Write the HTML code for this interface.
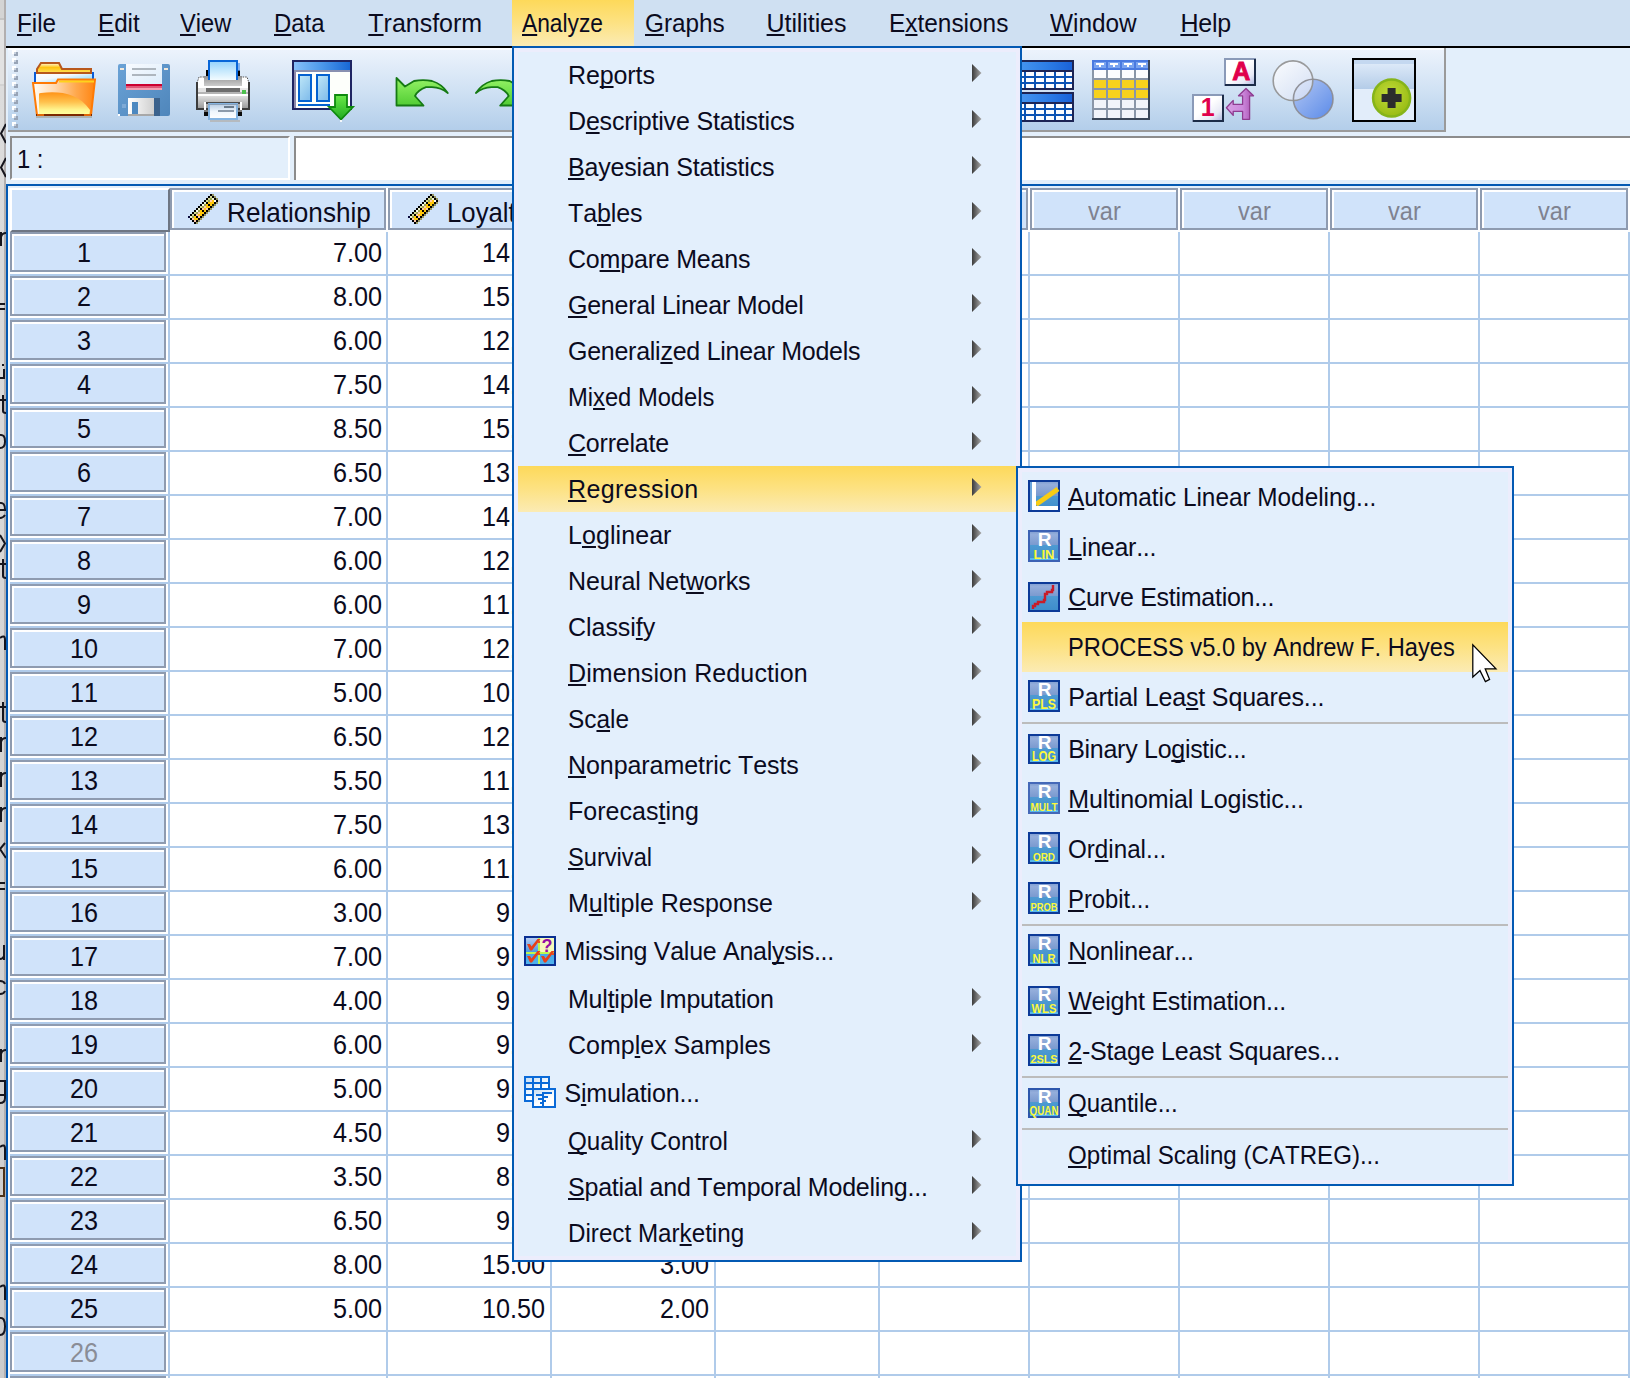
<!DOCTYPE html>
<html lang="en"><head><meta charset="utf-8"><title>IBM SPSS Statistics Data Editor</title>
<style>
html,body{margin:0;padding:0;}
body{width:1630px;height:1378px;overflow:hidden;background:#fff;font-family:"Liberation Sans",sans-serif;}
#root{position:relative;width:1630px;height:1378px;overflow:hidden;background:#fff;}
#root div,#root span.t,#root svg{position:absolute;box-sizing:border-box;}
span.t{white-space:pre;line-height:normal;font-kerning:none;color:#0b0b1e;transform-origin:0 0;}
span.t u{text-decoration:underline;text-decoration-thickness:2px;text-underline-offset:2px;text-decoration-skip-ink:none;}
.rh{background:#d0e3fa;border:2px solid #8e9bb0;box-shadow:inset 2px 2px 0 #fff;}
.ch{background:#d0e3fa;border:2px solid #8e9bb0;box-shadow:inset 2px 2px 0 #fff;}
.hl{background:linear-gradient(#fdd95a,#fde283 50%,#fbebb4);}
.menu{background:#ecedfc;border:2px solid #0359b3;}
.mi{background:#e3effc;}
.sep{background:#bcbcbc;}

</style></head>
<body>
<div id="root">
<div style="left:0px;top:0px;width:6px;height:1378px;background:linear-gradient(#d4d4d4 0,#d4d4d4 18px,#c4c4c4 18px,#c4c4c4 20px,#e2e2e2 20px,#e2e2e2 84px,#d2d2d2 84px,#d2d2d2 86px,#dcdcdc 86px,#d6d6d6 600px,#cccccc 100%);"></div>
<div style="left:4px;top:0px;width:2px;height:1378px;background:#b2afaf;"></div>
<svg style="left:0px;top:0px;" width="6" height="1378" viewBox="0 0 6 1378" ><path d="M6 124 L1 133.5 L6 143 M6 158 L1 167.5 L6 177 M1 232 V246 M1 237 Q2 233 6 233 M0 304 H5 M0 309 H5 M3 364 v2 M0 378 H5 M4 369 V378 M3 395 V411 Q3 413 6 413 M0 400 H6 M0 435 Q5 434 5 441.5 Q5 448 0 448 M0 510.0 H5 Q5 502 0 503 M0 518 Q3 518 5 515 M0 535 L5 543.5 L0 552 M3 559 V576 Q3 578 6 578 M0 564 H6 M0 638 Q5 634 5 640 V650 M3 702 V720 Q3 722 6 722 M0 707 H6 M1 737 V752 M1 742 Q2 738 6 738 M1 772 V787 M1 777 Q2 773 6 773 M1 807 V822 M1 812 Q2 808 6 808 M5 843 L0 849 L6 858 M0 883 H5 M0 889 H5 M4 945 V960 M0 959 Q3 959 4 956 M0 981 Q4 981 5 984 M0 994 Q4 994 5 991 M1 1049 V1062 M1 1054 Q2 1050 6 1050 M0 1081 H5 V1098 Q5 1103 0 1103 M0 1095 H5 M0 1147 Q5 1143 5 1149 V1160 M0 1287 Q5 1283 5 1289 V1300 M0 1318 Q5 1317 5 1326.5 Q5 1335 0 1335" fill="none" stroke="#15151d" stroke-width="2"/><rect x="-1" y="1168" width="5" height="28" fill="none" stroke="#4a3018" stroke-width="2"/></svg>
<div style="left:6px;top:0px;width:1624px;height:46px;background:#cfe0f2;"></div>
<div style="left:6px;top:46px;width:1624px;height:2px;background:#000;"></div>
<div class="hl" style="left:512px;top:0px;width:122px;height:46px;"></div>
<span class="t" style="left:16.50px;top:9.0px;font-size:25px;transform:scaleX(0.9701);"><u>F</u>ile</span>
<span class="t" style="left:98.20px;top:9.0px;font-size:25px;transform:scaleX(0.9675);"><u>E</u>dit</span>
<span class="t" style="left:179.80px;top:9.0px;font-size:25px;transform:scaleX(0.9457);"><u>V</u>iew</span>
<span class="t" style="left:274.00px;top:9.0px;font-size:25px;transform:scaleX(0.9563);"><u>D</u>ata</span>
<span class="t" style="left:368.30px;top:9.0px;font-size:25px;letter-spacing:-0.007px;"><u>T</u>ransform</span>
<span class="t" style="left:522.20px;top:9.0px;font-size:25px;transform:scaleX(0.9109);"><u>A</u>nalyze</span>
<span class="t" style="left:644.90px;top:9.0px;font-size:25px;transform:scaleX(0.9719);"><u>G</u>raphs</span>
<span class="t" style="left:766.60px;top:9.0px;font-size:25px;letter-spacing:-0.095px;"><u>U</u>tilities</span>
<span class="t" style="left:889.10px;top:9.0px;font-size:25px;transform:scaleX(0.9762);">E<u>x</u>tensions</span>
<span class="t" style="left:1050.10px;top:9.0px;font-size:25px;transform:scaleX(0.9744);"><u>W</u>indow</span>
<span class="t" style="left:1180.40px;top:9.0px;font-size:25px;letter-spacing:-0.189px;"><u>H</u>elp</span>
<div style="left:6px;top:48px;width:1624px;height:88px;background:#e3effb;"></div>
<div style="left:8px;top:48px;width:1438px;height:84px;background:linear-gradient(#fbfdff 0,#fbfdff 2px,#ecf3fc 2px,#d1e2f4 50%,#b3ceea 100%);border-right:2px solid #9a9a9a;border-bottom:2px solid #9a9a9a;"></div>
<svg style="left:12px;top:48px;" width="6" height="82" viewBox="0 0 6 82" ><rect x="0" y="2" width="4" height="4" fill="#fff"/><rect x="2" y="4" width="4" height="4" fill="#98a4b6"/><rect x="2" y="4" width="2" height="2" fill="#c8d2e0"/><rect x="0" y="10" width="4" height="4" fill="#fff"/><rect x="2" y="12" width="4" height="4" fill="#98a4b6"/><rect x="2" y="12" width="2" height="2" fill="#c8d2e0"/><rect x="0" y="18" width="4" height="4" fill="#fff"/><rect x="2" y="20" width="4" height="4" fill="#98a4b6"/><rect x="2" y="20" width="2" height="2" fill="#c8d2e0"/><rect x="0" y="26" width="4" height="4" fill="#fff"/><rect x="2" y="28" width="4" height="4" fill="#98a4b6"/><rect x="2" y="28" width="2" height="2" fill="#c8d2e0"/><rect x="0" y="34" width="4" height="4" fill="#fff"/><rect x="2" y="36" width="4" height="4" fill="#98a4b6"/><rect x="2" y="36" width="2" height="2" fill="#c8d2e0"/><rect x="0" y="42" width="4" height="4" fill="#fff"/><rect x="2" y="44" width="4" height="4" fill="#98a4b6"/><rect x="2" y="44" width="2" height="2" fill="#c8d2e0"/><rect x="0" y="50" width="4" height="4" fill="#fff"/><rect x="2" y="52" width="4" height="4" fill="#98a4b6"/><rect x="2" y="52" width="2" height="2" fill="#c8d2e0"/><rect x="0" y="58" width="4" height="4" fill="#fff"/><rect x="2" y="60" width="4" height="4" fill="#98a4b6"/><rect x="2" y="60" width="2" height="2" fill="#c8d2e0"/><rect x="0" y="66" width="4" height="4" fill="#fff"/><rect x="2" y="68" width="4" height="4" fill="#98a4b6"/><rect x="2" y="68" width="2" height="2" fill="#c8d2e0"/><rect x="0" y="74" width="4" height="4" fill="#fff"/><rect x="2" y="76" width="4" height="4" fill="#98a4b6"/><rect x="2" y="76" width="2" height="2" fill="#c8d2e0"/><rect x="0" y="82" width="4" height="4" fill="#fff"/><rect x="2" y="84" width="4" height="4" fill="#98a4b6"/><rect x="2" y="84" width="2" height="2" fill="#c8d2e0"/></svg>
<svg style="left:30px;top:60px;" width="68" height="60" viewBox="0 0 68 60" >
<defs>
<linearGradient id="fo1" x1="0" y1="0" x2="1" y2="0"><stop offset="0" stop-color="#fffdf6"/><stop offset="0.35" stop-color="#ffd9b0"/><stop offset="0.7" stop-color="#ffa84c"/><stop offset="1" stop-color="#ff8412"/></linearGradient>
<linearGradient id="fo2" x1="0" y1="0" x2="0" y2="1"><stop offset="0" stop-color="#ff9418"/><stop offset="0.45" stop-color="#ffc24e"/><stop offset="0.8" stop-color="#fff48e"/><stop offset="1" stop-color="#ffff9e"/></linearGradient>
<linearGradient id="fo3" x1="0" y1="0" x2="0" y2="1"><stop offset="0" stop-color="#fffbe0"/><stop offset="0.45" stop-color="#ffc412"/><stop offset="1" stop-color="#ffe25a"/></linearGradient>
<linearGradient id="fo4" x1="0" y1="0" x2="1" y2="1"><stop offset="0" stop-color="#fff"/><stop offset="0.4" stop-color="#f4f8fc"/><stop offset="0.7" stop-color="#aee4fc"/><stop offset="1" stop-color="#b8e6fa"/></linearGradient>
</defs>
<path d="M7 13 V9 L11 3 H29 L32 9 H61 V13 Z" fill="url(#fo3)" stroke="#b8581c" stroke-width="2" stroke-linejoin="miter"/>
<rect x="5" y="13" width="58" height="10" fill="url(#fo4)"/>
<rect x="4" y="12" width="2" height="11" fill="#0a5cd8"/><rect x="62" y="12" width="2" height="9" fill="#0a5cd8"/>
<rect x="6" y="12" width="56" height="2" fill="#b8581c"/>
<path d="M3 23 H26 L28 19.5 H65 L61 55 H7 Z" fill="url(#fo1)" stroke="#ff7a04" stroke-width="2" stroke-linejoin="miter"/>
<rect x="29" y="20.5" width="35" height="2" fill="#ffd21c"/>
<path d="M9 34 Q9 33 11 33 C30 31 48 33 60 50 L59.5 54 H9 Z" fill="url(#fo2)"/>
<path d="M6 55 H62" stroke="#7c2a00" stroke-width="2"/>
<path d="M7 55 H14 M54 55 H61" stroke="#e06808" stroke-width="2"/>
<path d="M6 57 H62" stroke="#a8a8a0" stroke-width="2" opacity="0.75"/>
</svg>
<svg style="left:118px;top:64px;" width="52" height="52" viewBox="0 0 52 52" >
<defs>
<linearGradient id="fl1" x1="0" y1="0" x2="1" y2="1"><stop offset="0" stop-color="#6aa2d6"/><stop offset="1" stop-color="#4f86bb"/></linearGradient>
<linearGradient id="fl2" x1="0" y1="0" x2="1" y2="1"><stop offset="0" stop-color="#f8fbff"/><stop offset="1" stop-color="#dcecfa"/></linearGradient>
<linearGradient id="fl3" x1="0" y1="0" x2="1" y2="0"><stop offset="0" stop-color="#fff"/><stop offset="1" stop-color="#cfcfcf"/></linearGradient>
</defs>
<rect x="0" y="0" width="52" height="52" rx="2" fill="url(#fl1)"/>
<rect x="8" y="0" width="36" height="20" fill="url(#fl2)"/>
<rect x="14" y="4" width="24" height="2" fill="#aeb6be"/>
<rect x="14" y="10" width="24" height="2" fill="#aeb6be"/>
<rect x="8" y="20" width="36" height="2" fill="#cc0030"/><rect x="8" y="22" width="36" height="2" fill="#e05878"/>
<rect x="8" y="24" width="36" height="2" fill="#f4a0b2"/>
<rect x="2" y="4" width="4" height="2" fill="#f2e8da"/>
<rect x="46" y="4" width="4" height="2" fill="#f2e8da"/>
<rect x="10" y="34" width="26" height="16" fill="url(#fl3)"/>
<rect x="14" y="38" width="6" height="12" fill="#4c88c0"/>
<rect x="36" y="34" width="6" height="18" fill="#3b628c"/>
<rect x="10" y="50" width="26" height="2" fill="#a8a8a8"/>
<rect x="4" y="40" width="4" height="4" fill="#7eaad6"/>
<rect x="0" y="50" width="2" height="2" fill="#fff"/>
</svg>
<svg style="left:194px;top:58px;" width="58" height="66" viewBox="0 0 58 66" >
<defs>
<linearGradient id="pr1" x1="0" y1="0" x2="0" y2="1"><stop offset="0" stop-color="#94d2fc"/><stop offset="0.5" stop-color="#c4e8fd"/><stop offset="1" stop-color="#f2fbff"/></linearGradient>
<linearGradient id="pr2" x1="0" y1="0" x2="0" y2="1"><stop offset="0" stop-color="#8c8c8c"/><stop offset="0.35" stop-color="#a8a8a8"/><stop offset="1" stop-color="#cccccc"/></linearGradient>
<linearGradient id="pr3" x1="0" y1="0" x2="0" y2="1"><stop offset="0" stop-color="#dedede"/><stop offset="1" stop-color="#9c9c9c"/></linearGradient>
<linearGradient id="pr4" x1="0" y1="0" x2="0" y2="1"><stop offset="0" stop-color="#b8cce2"/><stop offset="0.5" stop-color="#eef5fc"/><stop offset="1" stop-color="#fff"/></linearGradient>
</defs>
<rect x="12" y="12" width="2" height="6" fill="#000"/><rect x="44" y="12" width="2" height="6" fill="#000"/>
<path d="M5 19 L3 25 H55 L53 19 Z" fill="#fff" stroke="#555" stroke-width="1" stroke-dasharray="1.5 1"/>
<rect x="10" y="18" width="38" height="10" fill="url(#pr2)"/>
<rect x="3" y="25" width="52" height="26" fill="#fff" stroke="#3c3c3c" stroke-width="2"/>
<rect x="4" y="24" width="6" height="4" fill="#fff"/><rect x="48" y="24" width="6" height="4" fill="#fff"/><rect x="10" y="18" width="38" height="10" fill="url(#pr2)"/>
<rect x="4" y="28" width="50" height="2" fill="#fff"/>
<rect x="4" y="30" width="8" height="4" fill="#e2e2e2"/><rect x="12" y="30" width="34" height="4" fill="#6c6c6c"/><rect x="46" y="30" width="8" height="4" fill="#e8e8e8"/>
<rect x="4" y="34" width="50" height="2" fill="#b4b4b4"/>
<rect x="4" y="36" width="50" height="2" fill="#fff"/>
<rect x="4" y="38" width="50" height="12" fill="url(#pr3)"/>
<rect x="48" y="32" width="4" height="4" fill="#4cc04c"/>
<rect x="15" y="3" width="28" height="19" fill="url(#pr1)"/>
<path d="M15 22 V3 H43 V22" fill="none" stroke="#0866d8" stroke-width="2"/>
<rect x="44" y="5" width="2" height="8" fill="#5a9ae8" opacity="0.7"/>
<rect x="10" y="44" width="2" height="8" fill="#fff"/><rect x="46" y="44" width="2" height="8" fill="#fff"/>
<rect x="12" y="44" width="34" height="2" fill="#4a4a4a"/>
<rect x="10" y="52" width="4" height="2" fill="#777"/><rect x="44" y="52" width="4" height="2" fill="#777"/>
<rect x="10" y="54" width="4" height="4" fill="#0a0a0a"/><rect x="44" y="54" width="4" height="4" fill="#0a0a0a"/>
<rect x="15" y="46" width="28" height="15" fill="url(#pr4)" stroke="#84b4e2" stroke-width="2"/>
<rect x="14" y="46" width="30" height="1" fill="#8aa0b8"/>
<rect x="30" y="48" width="10" height="2" fill="#6a7a8a"/>
<rect x="24" y="52" width="16" height="2" fill="#8c9aaa"/>
<rect x="16" y="62" width="30" height="2" fill="#b4b4b4" opacity="0.8"/>
</svg>
<svg style="left:292px;top:60px;" width="64" height="64" viewBox="0 0 64 64" >
<defs>
<linearGradient id="rc1" x1="0" y1="0" x2="1" y2="0"><stop offset="0" stop-color="#86c0fa"/><stop offset="0.5" stop-color="#4c98ea"/><stop offset="1" stop-color="#1868d6"/></linearGradient>
<linearGradient id="rc2" x1="0" y1="0" x2="0.6" y2="1"><stop offset="0" stop-color="#c0e8f8"/><stop offset="1" stop-color="#86c0ec"/></linearGradient>
<linearGradient id="rc3" x1="0" y1="0" x2="0" y2="1"><stop offset="0" stop-color="#6ae848"/><stop offset="0.5" stop-color="#44cc34"/><stop offset="1" stop-color="#22a822"/></linearGradient>
</defs>
<rect x="1" y="1" width="58" height="48" fill="#fdfffb" stroke="#1e2462" stroke-width="2"/>
<rect x="2" y="2" width="56" height="8" fill="url(#rc1)"/>
<rect x="2" y="10" width="56" height="2" fill="#8890b0"/>
<rect x="2" y="12" width="2" height="36" fill="#8c88ac"/>
<rect x="7" y="15" width="12" height="26" fill="url(#rc2)" stroke="#0462d0" stroke-width="2"/>
<rect x="25" y="15" width="12" height="26" fill="url(#rc2)" stroke="#0462d0" stroke-width="2"/>
<rect x="6" y="44" width="32" height="2" fill="#0462d0"/>
<path d="M43 35 H55 V47 H61 L49 59.5 L37 47 H43 Z" fill="url(#rc3)" stroke="#0e8a0e" stroke-width="1.8" stroke-linejoin="miter"/>
<rect x="48" y="60" width="2" height="2" fill="#f4f8fb"/>
</svg>
<svg style="left:394px;top:76px;" width="58" height="34" viewBox="0 0 58 34" >
<defs><linearGradient id="un1" x1="0" y1="0" x2="0" y2="1"><stop offset="0" stop-color="#96f266"/><stop offset="0.5" stop-color="#72e04c"/><stop offset="1" stop-color="#52cc34"/></linearGradient></defs>
<path d="M2.5 2 L11 10.5 L20 5 Q29 3.3 38 5 Q48 8 53.8 17 Q47 11.6 38 11.2 L32 11.2 Q24 14 21 20 L29.5 29.5 H2.5 Z" fill="url(#un1)" stroke="#167a14" stroke-width="1.8" stroke-linejoin="round"/>
</svg>
<svg style="left:474px;top:76px;" width="58" height="34" viewBox="0 0 58 34" >
<g transform="translate(55.7 0) scale(-1 1)"><path d="M2.5 2 L11 10.5 L20 5 Q29 3.3 38 5 Q48 8 53.8 17 Q47 11.6 38 11.2 L32 11.2 Q24 14 21 20 L29.5 29.5 H2.5 Z" fill="url(#un1)" stroke="#167a14" stroke-width="1.8" stroke-linejoin="round"/></g>
</svg>
<svg style="left:1010px;top:60px;" width="64" height="62" viewBox="0 0 64 62" ><defs><linearGradient id="sp1" x1="0" y1="0" x2="1" y2="0"><stop offset="0" stop-color="#4c9cf2"/><stop offset="0.6" stop-color="#2c7ce6"/><stop offset="1" stop-color="#1a62d8"/></linearGradient></defs><rect x="0" y="0" width="64" height="30" fill="#1c2454"/><rect x="2" y="2" width="60" height="8" fill="url(#sp1)"/><rect x="2" y="12" width="60" height="16" fill="#0a52b4"/><rect x="-4" y="12" width="8" height="4" fill="#fafcff"/><rect x="6" y="12" width="8" height="4" fill="#fafcff"/><rect x="16" y="12" width="8" height="4" fill="#fafcff"/><rect x="26" y="12" width="8" height="4" fill="#fafcff"/><rect x="36" y="12" width="8" height="4" fill="#fafcff"/><rect x="46" y="12" width="8" height="4" fill="#fafcff"/><rect x="56" y="12" width="6" height="4" fill="#fafcff"/><rect x="-4" y="18" width="8" height="4" fill="#fafcff"/><rect x="6" y="18" width="8" height="4" fill="#fafcff"/><rect x="16" y="18" width="8" height="4" fill="#fafcff"/><rect x="26" y="18" width="8" height="4" fill="#fafcff"/><rect x="36" y="18" width="8" height="4" fill="#fafcff"/><rect x="46" y="18" width="8" height="4" fill="#fafcff"/><rect x="56" y="18" width="6" height="4" fill="#fafcff"/><rect x="-4" y="24" width="8" height="4" fill="#fafcff"/><rect x="6" y="24" width="8" height="4" fill="#fafcff"/><rect x="16" y="24" width="8" height="4" fill="#fafcff"/><rect x="26" y="24" width="8" height="4" fill="#fafcff"/><rect x="36" y="24" width="8" height="4" fill="#fafcff"/><rect x="46" y="24" width="8" height="4" fill="#fafcff"/><rect x="56" y="24" width="6" height="4" fill="#fafcff"/><rect x="0" y="32" width="64" height="30" fill="#1c2454"/><rect x="2" y="34" width="60" height="8" fill="url(#sp1)"/><rect x="2" y="44" width="60" height="16" fill="#0a52b4"/><rect x="-4" y="44" width="8" height="4" fill="#fafcff"/><rect x="6" y="44" width="8" height="4" fill="#fafcff"/><rect x="16" y="44" width="8" height="4" fill="#fafcff"/><rect x="26" y="44" width="8" height="4" fill="#fafcff"/><rect x="36" y="44" width="8" height="4" fill="#fafcff"/><rect x="46" y="44" width="8" height="4" fill="#fafcff"/><rect x="56" y="44" width="6" height="4" fill="#fafcff"/><rect x="-4" y="50" width="8" height="4" fill="#fafcff"/><rect x="6" y="50" width="8" height="4" fill="#fafcff"/><rect x="16" y="50" width="8" height="4" fill="#fafcff"/><rect x="26" y="50" width="8" height="4" fill="#fafcff"/><rect x="36" y="50" width="8" height="4" fill="#fafcff"/><rect x="46" y="50" width="8" height="4" fill="#fafcff"/><rect x="56" y="50" width="6" height="4" fill="#fafcff"/><rect x="-4" y="56" width="8" height="4" fill="#fafcff"/><rect x="6" y="56" width="8" height="4" fill="#fafcff"/><rect x="16" y="56" width="8" height="4" fill="#fafcff"/><rect x="26" y="56" width="8" height="4" fill="#fafcff"/><rect x="36" y="56" width="8" height="4" fill="#fafcff"/><rect x="46" y="56" width="8" height="4" fill="#fafcff"/><rect x="56" y="56" width="6" height="4" fill="#fafcff"/></svg>
<svg style="left:1092px;top:60px;" width="58" height="60" viewBox="0 0 58 60" ><rect x="0" y="0" width="58" height="60" fill="#8a96a8"/><rect x="0" y="0" width="58" height="10" fill="#4a7ae0"/><rect x="0" y="58" width="58" height="2" fill="#3a4658"/><rect x="56" y="0" width="2" height="60" fill="#3a4658"/><rect x="2" y="2" width="12" height="6" fill="#7aa4f0"/><path d="M4 3 h8 v2 h-3 v2 h-2 v-2 h-3 z" fill="#fff"/><rect x="2" y="10" width="12" height="8" fill="#fcfcfe"/><rect x="2" y="20" width="12" height="8" fill="#f8d21c"/><rect x="2" y="30" width="12" height="8" fill="#f8d21c"/><rect x="2" y="40" width="12" height="8" fill="#f2f4fa"/><rect x="2" y="50" width="12" height="8" fill="#f2f4fa"/><rect x="16" y="2" width="12" height="6" fill="#7aa4f0"/><path d="M18 3 h8 v2 h-3 v2 h-2 v-2 h-3 z" fill="#fff"/><rect x="16" y="10" width="12" height="8" fill="#fcfcfe"/><rect x="16" y="20" width="12" height="8" fill="#f8d21c"/><rect x="16" y="30" width="12" height="8" fill="#f8d21c"/><rect x="16" y="40" width="12" height="8" fill="#f2f4fa"/><rect x="16" y="50" width="12" height="8" fill="#f2f4fa"/><rect x="30" y="2" width="12" height="6" fill="#7aa4f0"/><path d="M32 3 h8 v2 h-3 v2 h-2 v-2 h-3 z" fill="#fff"/><rect x="30" y="10" width="12" height="8" fill="#fcfcfe"/><rect x="30" y="20" width="12" height="8" fill="#f8d21c"/><rect x="30" y="30" width="12" height="8" fill="#f8d21c"/><rect x="30" y="40" width="12" height="8" fill="#f2f4fa"/><rect x="30" y="50" width="12" height="8" fill="#f2f4fa"/><rect x="44" y="2" width="12" height="6" fill="#7aa4f0"/><path d="M46 3 h8 v2 h-3 v2 h-2 v-2 h-3 z" fill="#fff"/><rect x="44" y="10" width="12" height="8" fill="#fcfcfe"/><rect x="44" y="20" width="12" height="8" fill="#f8d21c"/><rect x="44" y="30" width="12" height="8" fill="#f8d21c"/><rect x="44" y="40" width="12" height="8" fill="#f2f4fa"/><rect x="44" y="50" width="12" height="8" fill="#f2f4fa"/></svg>
<svg style="left:1190px;top:56px;" width="70" height="70" viewBox="0 0 70 70" >
<defs><linearGradient id="lb1" x1="0" y1="0" x2="1" y2="1"><stop offset="0" stop-color="#fff"/><stop offset="0.45" stop-color="#fff"/><stop offset="0.75" stop-color="#e8eaf6"/><stop offset="1" stop-color="#a8b4de"/></linearGradient>
<linearGradient id="lb2" x1="0" y1="0" x2="1" y2="0"><stop offset="0" stop-color="#d8a0e4"/><stop offset="0.6" stop-color="#cc88dc"/><stop offset="1" stop-color="#a850b0"/></linearGradient></defs>
<rect x="35" y="3" width="30" height="26" fill="url(#lb1)"/>
<path d="M35 30 V3 H66" fill="none" stroke="#8a9ab8" stroke-width="2"/>
<path d="M35 29 H65 V3" fill="none" stroke="#1c2c48" stroke-width="2"/>
<text x="51.2" y="24" font-family="Liberation Sans, sans-serif" font-weight="bold" font-size="25" fill="#e0004c" stroke="#e0004c" stroke-width="0.9" text-anchor="middle">A</text>
<rect x="3" y="39" width="30" height="26" fill="url(#lb1)"/>
<path d="M3 66 V39 H34" fill="none" stroke="#8a9ab8" stroke-width="2"/>
<path d="M3 65 H33 V39" fill="none" stroke="#1c2c48" stroke-width="2"/>
<text x="17.8" y="60" font-family="Liberation Sans, sans-serif" font-weight="bold" font-size="25" fill="#e0004c" text-anchor="middle">1</text>
<path d="M56 32.5 L63.5 39.8 H59.6 V63.3 H52.6 V55.3 H43.2 V59.4 L36.4 51.8 L43.2 44.4 V48.4 H52.6 V39.8 H48.5 Z" fill="url(#lb2)" stroke="#8e3c90" stroke-width="1.3" stroke-linejoin="round"/>
</svg>
<svg style="left:1270px;top:58px;" width="66" height="64" viewBox="0 0 66 64" >
<defs><linearGradient id="ci1" x1="0" y1="0" x2="1" y2="1"><stop offset="0" stop-color="#fff"/><stop offset="1" stop-color="#d4def4"/></linearGradient>
<linearGradient id="ci2" x1="0" y1="0" x2="1" y2="1"><stop offset="0" stop-color="#b4c8f4"/><stop offset="1" stop-color="#5a8ae8"/></linearGradient></defs>
<circle cx="43.2" cy="41" r="19.8" fill="url(#ci2)"/>
<circle cx="23" cy="22.7" r="19.8" fill="url(#ci1)" fill-opacity="0.82"/>
<circle cx="43.2" cy="41" r="19.8" fill="none" stroke="#8a8a90" stroke-width="1.6" opacity="0.9"/>
<circle cx="23" cy="22.7" r="19.8" fill="none" stroke="#909090" stroke-width="1.6" opacity="0.9"/>
</svg>
<svg style="left:1352px;top:58px;" width="64" height="64" viewBox="0 0 64 64" >
<defs><linearGradient id="pb1" x1="0" y1="0" x2="0" y2="1"><stop offset="0" stop-color="#dce9f8"/><stop offset="1" stop-color="#b4cce8"/></linearGradient>
<radialGradient id="pb2" cx="0.45" cy="0.4" r="0.6"><stop offset="0" stop-color="#c4dc3a"/><stop offset="1" stop-color="#98bc14"/></radialGradient></defs>
<rect x="1" y="1" width="62" height="62" fill="#e2edfa" stroke="#000" stroke-width="2"/>
<rect x="2" y="2" width="60" height="4" fill="#c4d8f0"/>
<rect x="2" y="6" width="60" height="25" fill="url(#pb1)"/>
<circle cx="39.6" cy="40" r="18.5" fill="url(#pb2)" stroke="#86b41a" stroke-width="2.5"/>
<path d="M35.6 30 h8 v6 h6 v8 h-6 v6 h-8 v-6 h-6 v-8 h6 z" fill="#2c2c2c"/>
</svg>
<div style="left:6px;top:136px;width:1624px;height:48px;background:#e3effb;"></div>
<div style="left:10px;top:136px;width:280px;height:44px;background:#e3effb;border-top:2px solid #8c8c8c;border-left:2px solid #8c8c8c;border-right:2px solid #fff;border-bottom:2px solid #fff;"></div>
<div style="left:294px;top:136px;width:1336px;height:44px;background:#fff;border-top:2px solid #8c8c8c;border-left:2px solid #8c8c8c;"></div>
<span class="t" style="left:16.69px;top:145.0px;font-size:25px;transform:scaleX(0.9531);">1 :</span>
<div style="left:6px;top:184px;width:1624px;height:2px;background:#0359b3;"></div>
<div style="left:6px;top:186px;width:2px;height:1192px;background:#0359b3;"></div>
<div style="left:8px;top:186px;width:1622px;height:2px;background:#e3effb;"></div>
<div style="left:8px;top:188px;width:2px;height:1190px;background:#f4faff;"></div>
<div style="left:10px;top:188px;width:158px;height:1190px;background:#fff;"></div>
<div style="left:168px;top:232px;width:2px;height:1146px;background:#b0cbea;"></div>
<div style="left:386px;top:232px;width:2px;height:1146px;background:#b0cbea;"></div>
<div style="left:550px;top:232px;width:2px;height:1146px;background:#b0cbea;"></div>
<div style="left:714px;top:232px;width:2px;height:1146px;background:#b0cbea;"></div>
<div style="left:878px;top:232px;width:2px;height:1146px;background:#b0cbea;"></div>
<div style="left:1028px;top:232px;width:2px;height:1146px;background:#b0cbea;"></div>
<div style="left:1178px;top:232px;width:2px;height:1146px;background:#b0cbea;"></div>
<div style="left:1328px;top:232px;width:2px;height:1146px;background:#b0cbea;"></div>
<div style="left:1478px;top:232px;width:2px;height:1146px;background:#b0cbea;"></div>
<div style="left:1628px;top:232px;width:2px;height:1146px;background:#b0cbea;"></div>
<div style="left:10px;top:274px;width:1620px;height:2px;background:#b0cbea;"></div>
<div style="left:10px;top:318px;width:1620px;height:2px;background:#b0cbea;"></div>
<div style="left:10px;top:362px;width:1620px;height:2px;background:#b0cbea;"></div>
<div style="left:10px;top:406px;width:1620px;height:2px;background:#b0cbea;"></div>
<div style="left:10px;top:450px;width:1620px;height:2px;background:#b0cbea;"></div>
<div style="left:10px;top:494px;width:1620px;height:2px;background:#b0cbea;"></div>
<div style="left:10px;top:538px;width:1620px;height:2px;background:#b0cbea;"></div>
<div style="left:10px;top:582px;width:1620px;height:2px;background:#b0cbea;"></div>
<div style="left:10px;top:626px;width:1620px;height:2px;background:#b0cbea;"></div>
<div style="left:10px;top:670px;width:1620px;height:2px;background:#b0cbea;"></div>
<div style="left:10px;top:714px;width:1620px;height:2px;background:#b0cbea;"></div>
<div style="left:10px;top:758px;width:1620px;height:2px;background:#b0cbea;"></div>
<div style="left:10px;top:802px;width:1620px;height:2px;background:#b0cbea;"></div>
<div style="left:10px;top:846px;width:1620px;height:2px;background:#b0cbea;"></div>
<div style="left:10px;top:890px;width:1620px;height:2px;background:#b0cbea;"></div>
<div style="left:10px;top:934px;width:1620px;height:2px;background:#b0cbea;"></div>
<div style="left:10px;top:978px;width:1620px;height:2px;background:#b0cbea;"></div>
<div style="left:10px;top:1022px;width:1620px;height:2px;background:#b0cbea;"></div>
<div style="left:10px;top:1066px;width:1620px;height:2px;background:#b0cbea;"></div>
<div style="left:10px;top:1110px;width:1620px;height:2px;background:#b0cbea;"></div>
<div style="left:10px;top:1154px;width:1620px;height:2px;background:#b0cbea;"></div>
<div style="left:10px;top:1198px;width:1620px;height:2px;background:#b0cbea;"></div>
<div style="left:10px;top:1242px;width:1620px;height:2px;background:#b0cbea;"></div>
<div style="left:10px;top:1286px;width:1620px;height:2px;background:#b0cbea;"></div>
<div style="left:10px;top:1330px;width:1620px;height:2px;background:#b0cbea;"></div>
<div style="left:10px;top:1374px;width:1620px;height:2px;background:#b0cbea;"></div>
<div style="left:10px;top:1418px;width:1620px;height:2px;background:#b0cbea;"></div>
<div style="left:10px;top:188px;width:160px;height:44px;background:#d0e3fa;border-top:2px solid #fff;border-left:2px solid #fff;border-right:2px solid #6e7683;border-bottom:2px solid #6e7683;"></div>
<div class="ch" style="left:170px;top:188px;width:216px;height:42px;"></div>
<svg style="left:188px;top:194px;" width="32" height="30" viewBox="0 0 32 30" shape-rendering="crispEdges"><rect x="22" y="0" width="2" height="2" fill="#000"/><rect x="24" y="0" width="2" height="2" fill="#8c8a46" opacity="0.85"/><rect x="20" y="2" width="2" height="2" fill="#000"/><rect x="22" y="2" width="2" height="2" fill="#d4d894"/><rect x="24" y="2" width="2" height="2" fill="#000"/><rect x="26" y="2" width="2" height="2" fill="#8c8a46" opacity="0.85"/><rect x="18" y="4" width="2" height="2" fill="#000"/><rect x="20" y="4" width="2" height="2" fill="#d4d894"/><rect x="22" y="4" width="2" height="2" fill="#98a450"/><rect x="24" y="4" width="2" height="2" fill="#eef2d0"/><rect x="26" y="4" width="2" height="2" fill="#000"/><rect x="28" y="4" width="2" height="2" fill="#8c8a46" opacity="0.85"/><rect x="16" y="6" width="2" height="2" fill="#000"/><rect x="18" y="6" width="2" height="2" fill="#d4d894"/><rect x="20" y="6" width="2" height="2" fill="#98a450"/><rect x="22" y="6" width="2" height="2" fill="#ffc8a8"/><rect x="24" y="6" width="2" height="2" fill="#ffc80a"/><rect x="26" y="6" width="2" height="2" fill="#fffef4"/><rect x="28" y="6" width="2" height="2" fill="#000"/><rect x="30" y="6" width="2" height="2" fill="#d8d0c0" opacity="0.85"/><rect x="14" y="8" width="2" height="2" fill="#000"/><rect x="16" y="8" width="2" height="2" fill="#eef2d0"/><rect x="18" y="8" width="2" height="2" fill="#000"/><rect x="20" y="8" width="2" height="2" fill="#ffc80a"/><rect x="22" y="8" width="2" height="2" fill="#ffc80a"/><rect x="24" y="8" width="2" height="2" fill="#ffc80a"/><rect x="26" y="8" width="2" height="2" fill="#000"/><rect x="28" y="8" width="2" height="2" fill="#8c8a46" opacity="0.85"/><rect x="12" y="10" width="2" height="2" fill="#000"/><rect x="14" y="10" width="2" height="2" fill="#fffef4"/><rect x="16" y="10" width="2" height="2" fill="#98a450"/><rect x="18" y="10" width="2" height="2" fill="#ffc80a"/><rect x="20" y="10" width="2" height="2" fill="#000"/><rect x="22" y="10" width="2" height="2" fill="#ffc80a"/><rect x="24" y="10" width="2" height="2" fill="#1c2404"/><rect x="26" y="10" width="2" height="2" fill="#8c8a46" opacity="0.85"/><rect x="10" y="12" width="2" height="2" fill="#000"/><rect x="12" y="12" width="2" height="2" fill="#d4d894"/><rect x="14" y="12" width="2" height="2" fill="#98a450"/><rect x="16" y="12" width="2" height="2" fill="#ffc8a8"/><rect x="18" y="12" width="2" height="2" fill="#ffc80a"/><rect x="20" y="12" width="2" height="2" fill="#ffc80a"/><rect x="22" y="12" width="2" height="2" fill="#000"/><rect x="24" y="12" width="2" height="2" fill="#8c8a46" opacity="0.85"/><rect x="8" y="14" width="2" height="2" fill="#000"/><rect x="10" y="14" width="2" height="2" fill="#eef2d0"/><rect x="12" y="14" width="2" height="2" fill="#000"/><rect x="14" y="14" width="2" height="2" fill="#ffc8a8"/><rect x="16" y="14" width="2" height="2" fill="#ffc80a"/><rect x="18" y="14" width="2" height="2" fill="#ffc8a8"/><rect x="20" y="14" width="2" height="2" fill="#000"/><rect x="22" y="14" width="2" height="2" fill="#8c8a46" opacity="0.85"/><rect x="6" y="16" width="2" height="2" fill="#000"/><rect x="8" y="16" width="2" height="2" fill="#fffef4"/><rect x="10" y="16" width="2" height="2" fill="#98a450"/><rect x="12" y="16" width="2" height="2" fill="#ffc80a"/><rect x="14" y="16" width="2" height="2" fill="#000"/><rect x="16" y="16" width="2" height="2" fill="#ffc80a"/><rect x="18" y="16" width="2" height="2" fill="#000"/><rect x="20" y="16" width="2" height="2" fill="#8c8a46" opacity="0.85"/><rect x="4" y="18" width="2" height="2" fill="#000"/><rect x="6" y="18" width="2" height="2" fill="#d4d894"/><rect x="8" y="18" width="2" height="2" fill="#98a450"/><rect x="10" y="18" width="2" height="2" fill="#ffc8a8"/><rect x="12" y="18" width="2" height="2" fill="#ffc80a"/><rect x="14" y="18" width="2" height="2" fill="#ffc80a"/><rect x="16" y="18" width="2" height="2" fill="#000"/><rect x="18" y="18" width="2" height="2" fill="#8c8a46" opacity="0.85"/><rect x="2" y="20" width="2" height="2" fill="#000"/><rect x="4" y="20" width="2" height="2" fill="#d4d894"/><rect x="6" y="20" width="2" height="2" fill="#000"/><rect x="8" y="20" width="2" height="2" fill="#ffc8a8"/><rect x="10" y="20" width="2" height="2" fill="#ffc80a"/><rect x="12" y="20" width="2" height="2" fill="#ffc80a"/><rect x="14" y="20" width="2" height="2" fill="#000"/><rect x="16" y="20" width="2" height="2" fill="#8c8a46" opacity="0.85"/><rect x="0" y="22" width="2" height="2" fill="#0a0a3c"/><rect x="2" y="22" width="2" height="2" fill="#eef2d0"/><rect x="4" y="22" width="2" height="2" fill="#98a450"/><rect x="6" y="22" width="2" height="2" fill="#ffc80a"/><rect x="8" y="22" width="2" height="2" fill="#000"/><rect x="10" y="22" width="2" height="2" fill="#ffc8a8"/><rect x="12" y="22" width="2" height="2" fill="#000"/><rect x="14" y="22" width="2" height="2" fill="#8c8a46" opacity="0.85"/><rect x="2" y="24" width="2" height="2" fill="#000"/><rect x="4" y="24" width="2" height="2" fill="#ffc8a8"/><rect x="6" y="24" width="2" height="2" fill="#ffc80a"/><rect x="8" y="24" width="2" height="2" fill="#ffc80a"/><rect x="10" y="24" width="2" height="2" fill="#000"/><rect x="12" y="24" width="2" height="2" fill="#8c8a46" opacity="0.85"/><rect x="4" y="26" width="2" height="2" fill="#000"/><rect x="6" y="26" width="2" height="2" fill="#ffc8a8"/><rect x="8" y="26" width="2" height="2" fill="#000"/><rect x="10" y="26" width="2" height="2" fill="#8c8a46" opacity="0.85"/><rect x="6" y="28" width="2" height="2" fill="#000"/><rect x="8" y="28" width="2" height="2" fill="#8c8a46" opacity="0.85"/></svg>
<span class="t" style="left:226.86px;top:197.0px;font-size:28px;transform:scaleX(0.9335);">Relationship</span>
<div class="ch" style="left:388px;top:188px;width:162px;height:42px;"></div>
<svg style="left:408px;top:194px;" width="32" height="30" viewBox="0 0 32 30" shape-rendering="crispEdges"><rect x="22" y="0" width="2" height="2" fill="#000"/><rect x="24" y="0" width="2" height="2" fill="#8c8a46" opacity="0.85"/><rect x="20" y="2" width="2" height="2" fill="#000"/><rect x="22" y="2" width="2" height="2" fill="#d4d894"/><rect x="24" y="2" width="2" height="2" fill="#000"/><rect x="26" y="2" width="2" height="2" fill="#8c8a46" opacity="0.85"/><rect x="18" y="4" width="2" height="2" fill="#000"/><rect x="20" y="4" width="2" height="2" fill="#d4d894"/><rect x="22" y="4" width="2" height="2" fill="#98a450"/><rect x="24" y="4" width="2" height="2" fill="#eef2d0"/><rect x="26" y="4" width="2" height="2" fill="#000"/><rect x="28" y="4" width="2" height="2" fill="#8c8a46" opacity="0.85"/><rect x="16" y="6" width="2" height="2" fill="#000"/><rect x="18" y="6" width="2" height="2" fill="#d4d894"/><rect x="20" y="6" width="2" height="2" fill="#98a450"/><rect x="22" y="6" width="2" height="2" fill="#ffc8a8"/><rect x="24" y="6" width="2" height="2" fill="#ffc80a"/><rect x="26" y="6" width="2" height="2" fill="#fffef4"/><rect x="28" y="6" width="2" height="2" fill="#000"/><rect x="30" y="6" width="2" height="2" fill="#d8d0c0" opacity="0.85"/><rect x="14" y="8" width="2" height="2" fill="#000"/><rect x="16" y="8" width="2" height="2" fill="#eef2d0"/><rect x="18" y="8" width="2" height="2" fill="#000"/><rect x="20" y="8" width="2" height="2" fill="#ffc80a"/><rect x="22" y="8" width="2" height="2" fill="#ffc80a"/><rect x="24" y="8" width="2" height="2" fill="#ffc80a"/><rect x="26" y="8" width="2" height="2" fill="#000"/><rect x="28" y="8" width="2" height="2" fill="#8c8a46" opacity="0.85"/><rect x="12" y="10" width="2" height="2" fill="#000"/><rect x="14" y="10" width="2" height="2" fill="#fffef4"/><rect x="16" y="10" width="2" height="2" fill="#98a450"/><rect x="18" y="10" width="2" height="2" fill="#ffc80a"/><rect x="20" y="10" width="2" height="2" fill="#000"/><rect x="22" y="10" width="2" height="2" fill="#ffc80a"/><rect x="24" y="10" width="2" height="2" fill="#1c2404"/><rect x="26" y="10" width="2" height="2" fill="#8c8a46" opacity="0.85"/><rect x="10" y="12" width="2" height="2" fill="#000"/><rect x="12" y="12" width="2" height="2" fill="#d4d894"/><rect x="14" y="12" width="2" height="2" fill="#98a450"/><rect x="16" y="12" width="2" height="2" fill="#ffc8a8"/><rect x="18" y="12" width="2" height="2" fill="#ffc80a"/><rect x="20" y="12" width="2" height="2" fill="#ffc80a"/><rect x="22" y="12" width="2" height="2" fill="#000"/><rect x="24" y="12" width="2" height="2" fill="#8c8a46" opacity="0.85"/><rect x="8" y="14" width="2" height="2" fill="#000"/><rect x="10" y="14" width="2" height="2" fill="#eef2d0"/><rect x="12" y="14" width="2" height="2" fill="#000"/><rect x="14" y="14" width="2" height="2" fill="#ffc8a8"/><rect x="16" y="14" width="2" height="2" fill="#ffc80a"/><rect x="18" y="14" width="2" height="2" fill="#ffc8a8"/><rect x="20" y="14" width="2" height="2" fill="#000"/><rect x="22" y="14" width="2" height="2" fill="#8c8a46" opacity="0.85"/><rect x="6" y="16" width="2" height="2" fill="#000"/><rect x="8" y="16" width="2" height="2" fill="#fffef4"/><rect x="10" y="16" width="2" height="2" fill="#98a450"/><rect x="12" y="16" width="2" height="2" fill="#ffc80a"/><rect x="14" y="16" width="2" height="2" fill="#000"/><rect x="16" y="16" width="2" height="2" fill="#ffc80a"/><rect x="18" y="16" width="2" height="2" fill="#000"/><rect x="20" y="16" width="2" height="2" fill="#8c8a46" opacity="0.85"/><rect x="4" y="18" width="2" height="2" fill="#000"/><rect x="6" y="18" width="2" height="2" fill="#d4d894"/><rect x="8" y="18" width="2" height="2" fill="#98a450"/><rect x="10" y="18" width="2" height="2" fill="#ffc8a8"/><rect x="12" y="18" width="2" height="2" fill="#ffc80a"/><rect x="14" y="18" width="2" height="2" fill="#ffc80a"/><rect x="16" y="18" width="2" height="2" fill="#000"/><rect x="18" y="18" width="2" height="2" fill="#8c8a46" opacity="0.85"/><rect x="2" y="20" width="2" height="2" fill="#000"/><rect x="4" y="20" width="2" height="2" fill="#d4d894"/><rect x="6" y="20" width="2" height="2" fill="#000"/><rect x="8" y="20" width="2" height="2" fill="#ffc8a8"/><rect x="10" y="20" width="2" height="2" fill="#ffc80a"/><rect x="12" y="20" width="2" height="2" fill="#ffc80a"/><rect x="14" y="20" width="2" height="2" fill="#000"/><rect x="16" y="20" width="2" height="2" fill="#8c8a46" opacity="0.85"/><rect x="0" y="22" width="2" height="2" fill="#0a0a3c"/><rect x="2" y="22" width="2" height="2" fill="#eef2d0"/><rect x="4" y="22" width="2" height="2" fill="#98a450"/><rect x="6" y="22" width="2" height="2" fill="#ffc80a"/><rect x="8" y="22" width="2" height="2" fill="#000"/><rect x="10" y="22" width="2" height="2" fill="#ffc8a8"/><rect x="12" y="22" width="2" height="2" fill="#000"/><rect x="14" y="22" width="2" height="2" fill="#8c8a46" opacity="0.85"/><rect x="2" y="24" width="2" height="2" fill="#000"/><rect x="4" y="24" width="2" height="2" fill="#ffc8a8"/><rect x="6" y="24" width="2" height="2" fill="#ffc80a"/><rect x="8" y="24" width="2" height="2" fill="#ffc80a"/><rect x="10" y="24" width="2" height="2" fill="#000"/><rect x="12" y="24" width="2" height="2" fill="#8c8a46" opacity="0.85"/><rect x="4" y="26" width="2" height="2" fill="#000"/><rect x="6" y="26" width="2" height="2" fill="#ffc8a8"/><rect x="8" y="26" width="2" height="2" fill="#000"/><rect x="10" y="26" width="2" height="2" fill="#8c8a46" opacity="0.85"/><rect x="6" y="28" width="2" height="2" fill="#000"/><rect x="8" y="28" width="2" height="2" fill="#8c8a46" opacity="0.85"/></svg>
<span class="t" style="left:447.39px;top:197.0px;font-size:28px;transform:scaleX(0.9200);">Loyalty</span>
<div class="ch" style="left:552px;top:188px;width:162px;height:42px;"></div>
<svg style="left:572px;top:194px;" width="32" height="30" viewBox="0 0 32 30" shape-rendering="crispEdges"><rect x="22" y="0" width="2" height="2" fill="#000"/><rect x="24" y="0" width="2" height="2" fill="#8c8a46" opacity="0.85"/><rect x="20" y="2" width="2" height="2" fill="#000"/><rect x="22" y="2" width="2" height="2" fill="#d4d894"/><rect x="24" y="2" width="2" height="2" fill="#000"/><rect x="26" y="2" width="2" height="2" fill="#8c8a46" opacity="0.85"/><rect x="18" y="4" width="2" height="2" fill="#000"/><rect x="20" y="4" width="2" height="2" fill="#d4d894"/><rect x="22" y="4" width="2" height="2" fill="#98a450"/><rect x="24" y="4" width="2" height="2" fill="#eef2d0"/><rect x="26" y="4" width="2" height="2" fill="#000"/><rect x="28" y="4" width="2" height="2" fill="#8c8a46" opacity="0.85"/><rect x="16" y="6" width="2" height="2" fill="#000"/><rect x="18" y="6" width="2" height="2" fill="#d4d894"/><rect x="20" y="6" width="2" height="2" fill="#98a450"/><rect x="22" y="6" width="2" height="2" fill="#ffc8a8"/><rect x="24" y="6" width="2" height="2" fill="#ffc80a"/><rect x="26" y="6" width="2" height="2" fill="#fffef4"/><rect x="28" y="6" width="2" height="2" fill="#000"/><rect x="30" y="6" width="2" height="2" fill="#d8d0c0" opacity="0.85"/><rect x="14" y="8" width="2" height="2" fill="#000"/><rect x="16" y="8" width="2" height="2" fill="#eef2d0"/><rect x="18" y="8" width="2" height="2" fill="#000"/><rect x="20" y="8" width="2" height="2" fill="#ffc80a"/><rect x="22" y="8" width="2" height="2" fill="#ffc80a"/><rect x="24" y="8" width="2" height="2" fill="#ffc80a"/><rect x="26" y="8" width="2" height="2" fill="#000"/><rect x="28" y="8" width="2" height="2" fill="#8c8a46" opacity="0.85"/><rect x="12" y="10" width="2" height="2" fill="#000"/><rect x="14" y="10" width="2" height="2" fill="#fffef4"/><rect x="16" y="10" width="2" height="2" fill="#98a450"/><rect x="18" y="10" width="2" height="2" fill="#ffc80a"/><rect x="20" y="10" width="2" height="2" fill="#000"/><rect x="22" y="10" width="2" height="2" fill="#ffc80a"/><rect x="24" y="10" width="2" height="2" fill="#1c2404"/><rect x="26" y="10" width="2" height="2" fill="#8c8a46" opacity="0.85"/><rect x="10" y="12" width="2" height="2" fill="#000"/><rect x="12" y="12" width="2" height="2" fill="#d4d894"/><rect x="14" y="12" width="2" height="2" fill="#98a450"/><rect x="16" y="12" width="2" height="2" fill="#ffc8a8"/><rect x="18" y="12" width="2" height="2" fill="#ffc80a"/><rect x="20" y="12" width="2" height="2" fill="#ffc80a"/><rect x="22" y="12" width="2" height="2" fill="#000"/><rect x="24" y="12" width="2" height="2" fill="#8c8a46" opacity="0.85"/><rect x="8" y="14" width="2" height="2" fill="#000"/><rect x="10" y="14" width="2" height="2" fill="#eef2d0"/><rect x="12" y="14" width="2" height="2" fill="#000"/><rect x="14" y="14" width="2" height="2" fill="#ffc8a8"/><rect x="16" y="14" width="2" height="2" fill="#ffc80a"/><rect x="18" y="14" width="2" height="2" fill="#ffc8a8"/><rect x="20" y="14" width="2" height="2" fill="#000"/><rect x="22" y="14" width="2" height="2" fill="#8c8a46" opacity="0.85"/><rect x="6" y="16" width="2" height="2" fill="#000"/><rect x="8" y="16" width="2" height="2" fill="#fffef4"/><rect x="10" y="16" width="2" height="2" fill="#98a450"/><rect x="12" y="16" width="2" height="2" fill="#ffc80a"/><rect x="14" y="16" width="2" height="2" fill="#000"/><rect x="16" y="16" width="2" height="2" fill="#ffc80a"/><rect x="18" y="16" width="2" height="2" fill="#000"/><rect x="20" y="16" width="2" height="2" fill="#8c8a46" opacity="0.85"/><rect x="4" y="18" width="2" height="2" fill="#000"/><rect x="6" y="18" width="2" height="2" fill="#d4d894"/><rect x="8" y="18" width="2" height="2" fill="#98a450"/><rect x="10" y="18" width="2" height="2" fill="#ffc8a8"/><rect x="12" y="18" width="2" height="2" fill="#ffc80a"/><rect x="14" y="18" width="2" height="2" fill="#ffc80a"/><rect x="16" y="18" width="2" height="2" fill="#000"/><rect x="18" y="18" width="2" height="2" fill="#8c8a46" opacity="0.85"/><rect x="2" y="20" width="2" height="2" fill="#000"/><rect x="4" y="20" width="2" height="2" fill="#d4d894"/><rect x="6" y="20" width="2" height="2" fill="#000"/><rect x="8" y="20" width="2" height="2" fill="#ffc8a8"/><rect x="10" y="20" width="2" height="2" fill="#ffc80a"/><rect x="12" y="20" width="2" height="2" fill="#ffc80a"/><rect x="14" y="20" width="2" height="2" fill="#000"/><rect x="16" y="20" width="2" height="2" fill="#8c8a46" opacity="0.85"/><rect x="0" y="22" width="2" height="2" fill="#0a0a3c"/><rect x="2" y="22" width="2" height="2" fill="#eef2d0"/><rect x="4" y="22" width="2" height="2" fill="#98a450"/><rect x="6" y="22" width="2" height="2" fill="#ffc80a"/><rect x="8" y="22" width="2" height="2" fill="#000"/><rect x="10" y="22" width="2" height="2" fill="#ffc8a8"/><rect x="12" y="22" width="2" height="2" fill="#000"/><rect x="14" y="22" width="2" height="2" fill="#8c8a46" opacity="0.85"/><rect x="2" y="24" width="2" height="2" fill="#000"/><rect x="4" y="24" width="2" height="2" fill="#ffc8a8"/><rect x="6" y="24" width="2" height="2" fill="#ffc80a"/><rect x="8" y="24" width="2" height="2" fill="#ffc80a"/><rect x="10" y="24" width="2" height="2" fill="#000"/><rect x="12" y="24" width="2" height="2" fill="#8c8a46" opacity="0.85"/><rect x="4" y="26" width="2" height="2" fill="#000"/><rect x="6" y="26" width="2" height="2" fill="#ffc8a8"/><rect x="8" y="26" width="2" height="2" fill="#000"/><rect x="10" y="26" width="2" height="2" fill="#8c8a46" opacity="0.85"/><rect x="6" y="28" width="2" height="2" fill="#000"/><rect x="8" y="28" width="2" height="2" fill="#8c8a46" opacity="0.85"/></svg>
<span class="t" style="left:612.33px;top:197.0px;font-size:28px;transform:scaleX(0.9200);">Satisfaction</span>
<div class="ch" style="left:716px;top:188px;width:162px;height:42px;"></div>
<span class="t" style="left:780.52px;top:196.0px;font-size:26px;color:#7f8290;transform:scaleX(0.9074);">var</span>
<div class="ch" style="left:880px;top:188px;width:148px;height:42px;"></div>
<span class="t" style="left:937.52px;top:196.0px;font-size:26px;color:#7f8290;transform:scaleX(0.9074);">var</span>
<div class="ch" style="left:1030px;top:188px;width:148px;height:42px;"></div>
<span class="t" style="left:1087.52px;top:196.0px;font-size:26px;color:#7f8290;transform:scaleX(0.9074);">var</span>
<div class="ch" style="left:1180px;top:188px;width:148px;height:42px;"></div>
<span class="t" style="left:1237.52px;top:196.0px;font-size:26px;color:#7f8290;transform:scaleX(0.9074);">var</span>
<div class="ch" style="left:1330px;top:188px;width:148px;height:42px;"></div>
<span class="t" style="left:1387.52px;top:196.0px;font-size:26px;color:#7f8290;transform:scaleX(0.9074);">var</span>
<div class="ch" style="left:1480px;top:188px;width:148px;height:42px;"></div>
<span class="t" style="left:1537.52px;top:196.0px;font-size:26px;color:#7f8290;transform:scaleX(0.9074);">var</span>
<div class="rh" style="left:10px;top:232px;width:156px;height:40px;"></div>
<span class="t" style="left:77.49px;top:237.0px;font-size:28px;transform:scaleX(0.9000);">1</span>
<span class="t" style="left:333.14px;top:237.0px;font-size:28px;transform:scaleX(0.9000);">7.00</span>
<span class="t" style="left:482.32px;top:237.0px;font-size:28px;transform:scaleX(0.9000);">14.00</span>
<span class="t" style="left:660.34px;top:237.0px;font-size:28px;transform:scaleX(0.9000);">4.00</span>
<div class="rh" style="left:10px;top:276px;width:156px;height:40px;"></div>
<span class="t" style="left:77.49px;top:281.0px;font-size:28px;transform:scaleX(0.9000);">2</span>
<span class="t" style="left:333.14px;top:281.0px;font-size:28px;transform:scaleX(0.9000);">8.00</span>
<span class="t" style="left:482.32px;top:281.0px;font-size:28px;transform:scaleX(0.9000);">15.50</span>
<span class="t" style="left:660.34px;top:281.0px;font-size:28px;transform:scaleX(0.9000);">4.00</span>
<div class="rh" style="left:10px;top:320px;width:156px;height:40px;"></div>
<span class="t" style="left:77.49px;top:325.0px;font-size:28px;transform:scaleX(0.9000);">3</span>
<span class="t" style="left:333.14px;top:325.0px;font-size:28px;transform:scaleX(0.9000);">6.00</span>
<span class="t" style="left:482.32px;top:325.0px;font-size:28px;transform:scaleX(0.9000);">12.00</span>
<span class="t" style="left:660.34px;top:325.0px;font-size:28px;transform:scaleX(0.9000);">3.00</span>
<div class="rh" style="left:10px;top:364px;width:156px;height:40px;"></div>
<span class="t" style="left:77.49px;top:369.0px;font-size:28px;transform:scaleX(0.9000);">4</span>
<span class="t" style="left:333.14px;top:369.0px;font-size:28px;transform:scaleX(0.9000);">7.50</span>
<span class="t" style="left:482.32px;top:369.0px;font-size:28px;transform:scaleX(0.9000);">14.50</span>
<span class="t" style="left:660.34px;top:369.0px;font-size:28px;transform:scaleX(0.9000);">4.00</span>
<div class="rh" style="left:10px;top:408px;width:156px;height:40px;"></div>
<span class="t" style="left:77.49px;top:413.0px;font-size:28px;transform:scaleX(0.9000);">5</span>
<span class="t" style="left:333.14px;top:413.0px;font-size:28px;transform:scaleX(0.9000);">8.50</span>
<span class="t" style="left:482.32px;top:413.0px;font-size:28px;transform:scaleX(0.9000);">15.00</span>
<span class="t" style="left:660.34px;top:413.0px;font-size:28px;transform:scaleX(0.9000);">5.00</span>
<div class="rh" style="left:10px;top:452px;width:156px;height:40px;"></div>
<span class="t" style="left:77.49px;top:457.0px;font-size:28px;transform:scaleX(0.9000);">6</span>
<span class="t" style="left:333.14px;top:457.0px;font-size:28px;transform:scaleX(0.9000);">6.50</span>
<span class="t" style="left:482.32px;top:457.0px;font-size:28px;transform:scaleX(0.9000);">13.00</span>
<span class="t" style="left:660.34px;top:457.0px;font-size:28px;transform:scaleX(0.9000);">3.00</span>
<div class="rh" style="left:10px;top:496px;width:156px;height:40px;"></div>
<span class="t" style="left:77.49px;top:501.0px;font-size:28px;transform:scaleX(0.9000);">7</span>
<span class="t" style="left:333.14px;top:501.0px;font-size:28px;transform:scaleX(0.9000);">7.00</span>
<span class="t" style="left:482.32px;top:501.0px;font-size:28px;transform:scaleX(0.9000);">14.00</span>
<span class="t" style="left:660.34px;top:501.0px;font-size:28px;transform:scaleX(0.9000);">4.00</span>
<div class="rh" style="left:10px;top:540px;width:156px;height:40px;"></div>
<span class="t" style="left:77.49px;top:545.0px;font-size:28px;transform:scaleX(0.9000);">8</span>
<span class="t" style="left:333.14px;top:545.0px;font-size:28px;transform:scaleX(0.9000);">6.00</span>
<span class="t" style="left:482.32px;top:545.0px;font-size:28px;transform:scaleX(0.9000);">12.50</span>
<span class="t" style="left:660.34px;top:545.0px;font-size:28px;transform:scaleX(0.9000);">3.00</span>
<div class="rh" style="left:10px;top:584px;width:156px;height:40px;"></div>
<span class="t" style="left:77.49px;top:589.0px;font-size:28px;transform:scaleX(0.9000);">9</span>
<span class="t" style="left:333.14px;top:589.0px;font-size:28px;transform:scaleX(0.9000);">6.00</span>
<span class="t" style="left:482.32px;top:589.0px;font-size:28px;transform:scaleX(0.9000);">11.00</span>
<span class="t" style="left:660.34px;top:589.0px;font-size:28px;transform:scaleX(0.9000);">3.00</span>
<div class="rh" style="left:10px;top:628px;width:156px;height:40px;"></div>
<span class="t" style="left:70.48px;top:633.0px;font-size:28px;transform:scaleX(0.9000);">10</span>
<span class="t" style="left:333.14px;top:633.0px;font-size:28px;transform:scaleX(0.9000);">7.00</span>
<span class="t" style="left:482.32px;top:633.0px;font-size:28px;transform:scaleX(0.9000);">12.00</span>
<span class="t" style="left:660.34px;top:633.0px;font-size:28px;transform:scaleX(0.9000);">4.00</span>
<div class="rh" style="left:10px;top:672px;width:156px;height:40px;"></div>
<span class="t" style="left:70.48px;top:677.0px;font-size:28px;transform:scaleX(0.9000);">11</span>
<span class="t" style="left:333.14px;top:677.0px;font-size:28px;transform:scaleX(0.9000);">5.00</span>
<span class="t" style="left:482.32px;top:677.0px;font-size:28px;transform:scaleX(0.9000);">10.00</span>
<span class="t" style="left:660.34px;top:677.0px;font-size:28px;transform:scaleX(0.9000);">2.00</span>
<div class="rh" style="left:10px;top:716px;width:156px;height:40px;"></div>
<span class="t" style="left:70.48px;top:721.0px;font-size:28px;transform:scaleX(0.9000);">12</span>
<span class="t" style="left:333.14px;top:721.0px;font-size:28px;transform:scaleX(0.9000);">6.50</span>
<span class="t" style="left:482.32px;top:721.0px;font-size:28px;transform:scaleX(0.9000);">12.50</span>
<span class="t" style="left:660.34px;top:721.0px;font-size:28px;transform:scaleX(0.9000);">3.00</span>
<div class="rh" style="left:10px;top:760px;width:156px;height:40px;"></div>
<span class="t" style="left:70.48px;top:765.0px;font-size:28px;transform:scaleX(0.9000);">13</span>
<span class="t" style="left:333.14px;top:765.0px;font-size:28px;transform:scaleX(0.9000);">5.50</span>
<span class="t" style="left:482.32px;top:765.0px;font-size:28px;transform:scaleX(0.9000);">11.00</span>
<span class="t" style="left:660.34px;top:765.0px;font-size:28px;transform:scaleX(0.9000);">3.00</span>
<div class="rh" style="left:10px;top:804px;width:156px;height:40px;"></div>
<span class="t" style="left:70.48px;top:809.0px;font-size:28px;transform:scaleX(0.9000);">14</span>
<span class="t" style="left:333.14px;top:809.0px;font-size:28px;transform:scaleX(0.9000);">7.50</span>
<span class="t" style="left:482.32px;top:809.0px;font-size:28px;transform:scaleX(0.9000);">13.50</span>
<span class="t" style="left:660.34px;top:809.0px;font-size:28px;transform:scaleX(0.9000);">4.00</span>
<div class="rh" style="left:10px;top:848px;width:156px;height:40px;"></div>
<span class="t" style="left:70.48px;top:853.0px;font-size:28px;transform:scaleX(0.9000);">15</span>
<span class="t" style="left:333.14px;top:853.0px;font-size:28px;transform:scaleX(0.9000);">6.00</span>
<span class="t" style="left:482.32px;top:853.0px;font-size:28px;transform:scaleX(0.9000);">11.50</span>
<span class="t" style="left:660.34px;top:853.0px;font-size:28px;transform:scaleX(0.9000);">3.00</span>
<div class="rh" style="left:10px;top:892px;width:156px;height:40px;"></div>
<span class="t" style="left:70.48px;top:897.0px;font-size:28px;transform:scaleX(0.9000);">16</span>
<span class="t" style="left:333.14px;top:897.0px;font-size:28px;transform:scaleX(0.9000);">3.00</span>
<span class="t" style="left:496.34px;top:897.0px;font-size:28px;transform:scaleX(0.9000);">9.00</span>
<span class="t" style="left:660.34px;top:897.0px;font-size:28px;transform:scaleX(0.9000);">2.00</span>
<div class="rh" style="left:10px;top:936px;width:156px;height:40px;"></div>
<span class="t" style="left:70.48px;top:941.0px;font-size:28px;transform:scaleX(0.9000);">17</span>
<span class="t" style="left:333.14px;top:941.0px;font-size:28px;transform:scaleX(0.9000);">7.00</span>
<span class="t" style="left:496.34px;top:941.0px;font-size:28px;transform:scaleX(0.9000);">9.50</span>
<span class="t" style="left:660.34px;top:941.0px;font-size:28px;transform:scaleX(0.9000);">3.00</span>
<div class="rh" style="left:10px;top:980px;width:156px;height:40px;"></div>
<span class="t" style="left:70.48px;top:985.0px;font-size:28px;transform:scaleX(0.9000);">18</span>
<span class="t" style="left:333.14px;top:985.0px;font-size:28px;transform:scaleX(0.9000);">4.00</span>
<span class="t" style="left:496.34px;top:985.0px;font-size:28px;transform:scaleX(0.9000);">9.00</span>
<span class="t" style="left:660.34px;top:985.0px;font-size:28px;transform:scaleX(0.9000);">2.00</span>
<div class="rh" style="left:10px;top:1024px;width:156px;height:40px;"></div>
<span class="t" style="left:70.48px;top:1029.0px;font-size:28px;transform:scaleX(0.9000);">19</span>
<span class="t" style="left:333.14px;top:1029.0px;font-size:28px;transform:scaleX(0.9000);">6.00</span>
<span class="t" style="left:496.34px;top:1029.0px;font-size:28px;transform:scaleX(0.9000);">9.50</span>
<span class="t" style="left:660.34px;top:1029.0px;font-size:28px;transform:scaleX(0.9000);">3.00</span>
<div class="rh" style="left:10px;top:1068px;width:156px;height:40px;"></div>
<span class="t" style="left:70.48px;top:1073.0px;font-size:28px;transform:scaleX(0.9000);">20</span>
<span class="t" style="left:333.14px;top:1073.0px;font-size:28px;transform:scaleX(0.9000);">5.00</span>
<span class="t" style="left:496.34px;top:1073.0px;font-size:28px;transform:scaleX(0.9000);">9.00</span>
<span class="t" style="left:660.34px;top:1073.0px;font-size:28px;transform:scaleX(0.9000);">2.00</span>
<div class="rh" style="left:10px;top:1112px;width:156px;height:40px;"></div>
<span class="t" style="left:70.48px;top:1117.0px;font-size:28px;transform:scaleX(0.9000);">21</span>
<span class="t" style="left:333.14px;top:1117.0px;font-size:28px;transform:scaleX(0.9000);">4.50</span>
<span class="t" style="left:496.34px;top:1117.0px;font-size:28px;transform:scaleX(0.9000);">9.50</span>
<span class="t" style="left:660.34px;top:1117.0px;font-size:28px;transform:scaleX(0.9000);">2.00</span>
<div class="rh" style="left:10px;top:1156px;width:156px;height:40px;"></div>
<span class="t" style="left:70.48px;top:1161.0px;font-size:28px;transform:scaleX(0.9000);">22</span>
<span class="t" style="left:333.14px;top:1161.0px;font-size:28px;transform:scaleX(0.9000);">3.50</span>
<span class="t" style="left:496.34px;top:1161.0px;font-size:28px;transform:scaleX(0.9000);">8.00</span>
<span class="t" style="left:660.34px;top:1161.0px;font-size:28px;transform:scaleX(0.9000);">2.00</span>
<div class="rh" style="left:10px;top:1200px;width:156px;height:40px;"></div>
<span class="t" style="left:70.48px;top:1205.0px;font-size:28px;transform:scaleX(0.9000);">23</span>
<span class="t" style="left:333.14px;top:1205.0px;font-size:28px;transform:scaleX(0.9000);">6.50</span>
<span class="t" style="left:496.34px;top:1205.0px;font-size:28px;transform:scaleX(0.9000);">9.00</span>
<span class="t" style="left:660.34px;top:1205.0px;font-size:28px;transform:scaleX(0.9000);">3.00</span>
<div class="rh" style="left:10px;top:1244px;width:156px;height:40px;"></div>
<span class="t" style="left:70.48px;top:1249.0px;font-size:28px;transform:scaleX(0.9000);">24</span>
<span class="t" style="left:333.14px;top:1249.0px;font-size:28px;transform:scaleX(0.9000);">8.00</span>
<span class="t" style="left:482.32px;top:1249.0px;font-size:28px;transform:scaleX(0.9000);">15.00</span>
<span class="t" style="left:660.34px;top:1249.0px;font-size:28px;transform:scaleX(0.9000);">3.00</span>
<div class="rh" style="left:10px;top:1288px;width:156px;height:40px;"></div>
<span class="t" style="left:70.48px;top:1293.0px;font-size:28px;transform:scaleX(0.9000);">25</span>
<span class="t" style="left:333.14px;top:1293.0px;font-size:28px;transform:scaleX(0.9000);">5.00</span>
<span class="t" style="left:482.32px;top:1293.0px;font-size:28px;transform:scaleX(0.9000);">10.50</span>
<span class="t" style="left:660.34px;top:1293.0px;font-size:28px;transform:scaleX(0.9000);">2.00</span>
<div class="rh" style="left:10px;top:1332px;width:156px;height:40px;"></div>
<span class="t" style="left:70.48px;top:1337.0px;font-size:28px;color:#8a8d96;transform:scaleX(0.9000);">26</span>
<div class="rh" style="left:10px;top:1376px;width:156px;height:40px;"></div>
<div class="menu" style="left:512px;top:46px;width:510px;height:1216px;"></div>
<div class="mi" style="left:518px;top:52px;width:498px;height:1204px;"></div>
<svg style="left:0px;top:0px;" width="1" height="1" viewBox="0 0 1 1" ><defs><linearGradient id="ar" x1="0" y1="0" x2="1" y2="0"><stop offset="0" stop-color="#3c3c3c"/><stop offset="1" stop-color="#a8a8a8"/></linearGradient></defs></svg>
<span class="t" style="left:568.00px;top:60.5px;font-size:25px;letter-spacing:-0.106px;">Re<u>p</u>orts</span>
<svg style="left:972px;top:64px;" width="10" height="18" viewBox="0 0 10 18" ><path d="M0 0 L9.5 9 L0 18 Z" fill="url(#ar)"/></svg>
<span class="t" style="left:568.00px;top:106.5px;font-size:25px;letter-spacing:-0.182px;">D<u>e</u>scriptive Statistics</span>
<svg style="left:972px;top:110px;" width="10" height="18" viewBox="0 0 10 18" ><path d="M0 0 L9.5 9 L0 18 Z" fill="url(#ar)"/></svg>
<span class="t" style="left:568.00px;top:152.5px;font-size:25px;letter-spacing:-0.184px;"><u>B</u>ayesian Statistics</span>
<svg style="left:972px;top:156px;" width="10" height="18" viewBox="0 0 10 18" ><path d="M0 0 L9.5 9 L0 18 Z" fill="url(#ar)"/></svg>
<span class="t" style="left:568.00px;top:198.5px;font-size:25px;letter-spacing:-0.107px;">Ta<u>b</u>les</span>
<svg style="left:972px;top:202px;" width="10" height="18" viewBox="0 0 10 18" ><path d="M0 0 L9.5 9 L0 18 Z" fill="url(#ar)"/></svg>
<span class="t" style="left:568.00px;top:244.5px;font-size:25px;letter-spacing:-0.192px;">Co<u>m</u>pare Means</span>
<svg style="left:972px;top:248px;" width="10" height="18" viewBox="0 0 10 18" ><path d="M0 0 L9.5 9 L0 18 Z" fill="url(#ar)"/></svg>
<span class="t" style="left:568.00px;top:290.5px;font-size:25px;letter-spacing:-0.244px;"><u>G</u>eneral Linear Model</span>
<svg style="left:972px;top:294px;" width="10" height="18" viewBox="0 0 10 18" ><path d="M0 0 L9.5 9 L0 18 Z" fill="url(#ar)"/></svg>
<span class="t" style="left:568.00px;top:336.5px;font-size:25px;letter-spacing:-0.261px;">Generali<u>z</u>ed Linear Models</span>
<svg style="left:972px;top:340px;" width="10" height="18" viewBox="0 0 10 18" ><path d="M0 0 L9.5 9 L0 18 Z" fill="url(#ar)"/></svg>
<span class="t" style="left:568.00px;top:382.5px;font-size:25px;transform:scaleX(0.9490);">Mi<u>x</u>ed Models</span>
<svg style="left:972px;top:386px;" width="10" height="18" viewBox="0 0 10 18" ><path d="M0 0 L9.5 9 L0 18 Z" fill="url(#ar)"/></svg>
<span class="t" style="left:568.00px;top:428.5px;font-size:25px;letter-spacing:-0.214px;"><u>C</u>orrelate</span>
<svg style="left:972px;top:432px;" width="10" height="18" viewBox="0 0 10 18" ><path d="M0 0 L9.5 9 L0 18 Z" fill="url(#ar)"/></svg>
<div class="hl" style="left:518px;top:466px;width:498px;height:46px;"></div>
<span class="t" style="left:568.00px;top:474.5px;font-size:25px;letter-spacing:0.408px;"><u>R</u>egression</span>
<svg style="left:972px;top:478px;" width="10" height="18" viewBox="0 0 10 18" ><path d="M0 0 L9.5 9 L0 18 Z" fill="url(#ar)"/></svg>
<span class="t" style="left:568.00px;top:520.5px;font-size:25px;letter-spacing:0.070px;">L<u>o</u>glinear</span>
<svg style="left:972px;top:524px;" width="10" height="18" viewBox="0 0 10 18" ><path d="M0 0 L9.5 9 L0 18 Z" fill="url(#ar)"/></svg>
<span class="t" style="left:568.00px;top:566.5px;font-size:25px;letter-spacing:-0.162px;">Neural Net<u>w</u>orks</span>
<svg style="left:972px;top:570px;" width="10" height="18" viewBox="0 0 10 18" ><path d="M0 0 L9.5 9 L0 18 Z" fill="url(#ar)"/></svg>
<span class="t" style="left:568.00px;top:612.5px;font-size:25px;letter-spacing:-0.038px;">Classi<u>f</u>y</span>
<svg style="left:972px;top:616px;" width="10" height="18" viewBox="0 0 10 18" ><path d="M0 0 L9.5 9 L0 18 Z" fill="url(#ar)"/></svg>
<span class="t" style="left:568.00px;top:658.5px;font-size:25px;letter-spacing:0.111px;"><u>D</u>imension Reduction</span>
<svg style="left:972px;top:662px;" width="10" height="18" viewBox="0 0 10 18" ><path d="M0 0 L9.5 9 L0 18 Z" fill="url(#ar)"/></svg>
<span class="t" style="left:568.00px;top:704.5px;font-size:25px;transform:scaleX(0.9752);">Sc<u>a</u>le</span>
<svg style="left:972px;top:708px;" width="10" height="18" viewBox="0 0 10 18" ><path d="M0 0 L9.5 9 L0 18 Z" fill="url(#ar)"/></svg>
<span class="t" style="left:568.00px;top:750.5px;font-size:25px;letter-spacing:-0.068px;"><u>N</u>onparametric Tests</span>
<svg style="left:972px;top:754px;" width="10" height="18" viewBox="0 0 10 18" ><path d="M0 0 L9.5 9 L0 18 Z" fill="url(#ar)"/></svg>
<span class="t" style="left:568.00px;top:796.5px;font-size:25px;letter-spacing:0.020px;">Forecas<u>t</u>ing</span>
<svg style="left:972px;top:800px;" width="10" height="18" viewBox="0 0 10 18" ><path d="M0 0 L9.5 9 L0 18 Z" fill="url(#ar)"/></svg>
<span class="t" style="left:568.00px;top:842.5px;font-size:25px;transform:scaleX(0.9456);"><u>S</u>urvival</span>
<svg style="left:972px;top:846px;" width="10" height="18" viewBox="0 0 10 18" ><path d="M0 0 L9.5 9 L0 18 Z" fill="url(#ar)"/></svg>
<span class="t" style="left:568.00px;top:888.5px;font-size:25px;letter-spacing:-0.047px;">M<u>u</u>ltiple Response</span>
<svg style="left:972px;top:892px;" width="10" height="18" viewBox="0 0 10 18" ><path d="M0 0 L9.5 9 L0 18 Z" fill="url(#ar)"/></svg>
<span class="t" style="left:564.40px;top:936.5px;font-size:25px;letter-spacing:-0.280px;">Missing Value Anal<u>y</u>sis...</span>
<svg style="left:524px;top:936px;" width="32" height="30" viewBox="0 0 32 30" ><defs><linearGradient id="mv1" x1="0" y1="0" x2="0" y2="1"><stop offset="0" stop-color="#b8ccf0"/><stop offset="1" stop-color="#4a9ae2"/></linearGradient>
<linearGradient id="mv2" x1="0" y1="0" x2="0" y2="1"><stop offset="0" stop-color="#3c92e0"/><stop offset="1" stop-color="#50b4ee"/></linearGradient></defs>
<rect x="1" y="1" width="30" height="28" fill="url(#mv2)" stroke="#0a2f92" stroke-width="2"/>
<rect x="2" y="2" width="12" height="14" fill="url(#mv1)"/>
<rect x="16" y="2" width="14" height="14" fill="#f6fabc"/>
<rect x="14" y="2" width="2" height="26" fill="#bef650"/><rect x="2" y="16" width="28" height="2" fill="#bef650"/><path d="M3 8 h3 l1.5 2.5 l6 -7.5 h3 l-8.5 11.5 h-2 z" fill="#e84018"/><path d="M3 20 h3 l1.5 2.5 l6 -7.5 h3 l-8.5 11.5 h-2 z" fill="#e84018"/><path d="M17 20 h3 l1.5 2.5 l6 -7.5 h3 l-8.5 11.5 h-2 z" fill="#e84018"/><path d="M14 5 h2 v2 h-2 z M14 17 h2 v2 h-2 z M28 17 h2 v2 h-2 z" fill="#e85020"/>
<text x="23" y="15.6" font-family="Liberation Sans, sans-serif" font-weight="bold" font-size="18" fill="#9410a4" text-anchor="middle">?</text></svg>
<span class="t" style="left:568.00px;top:984.5px;font-size:25px;letter-spacing:-0.222px;">Mul<u>t</u>iple Imputation</span>
<svg style="left:972px;top:988px;" width="10" height="18" viewBox="0 0 10 18" ><path d="M0 0 L9.5 9 L0 18 Z" fill="url(#ar)"/></svg>
<span class="t" style="left:568.00px;top:1030.5px;font-size:25px;">Comp<u>l</u>ex Samples</span>
<svg style="left:972px;top:1034px;" width="10" height="18" viewBox="0 0 10 18" ><path d="M0 0 L9.5 9 L0 18 Z" fill="url(#ar)"/></svg>
<span class="t" style="left:564.40px;top:1078.5px;font-size:25px;letter-spacing:-0.173px;">S<u>i</u>mulation...</span>
<svg style="left:524px;top:1076px;" width="32" height="32" viewBox="0 0 32 32" ><defs><linearGradient id="sm1" x1="0" y1="0" x2="0.6" y2="1"><stop offset="0" stop-color="#c4dcf2"/><stop offset="0.7" stop-color="#fff"/></linearGradient></defs><rect x="1" y="1" width="24" height="24" fill="url(#sm1)" stroke="#0a6ad8" stroke-width="2"/><rect x="8" y="0" width="2" height="26" fill="#0a6ad8"/><rect x="16" y="0" width="2" height="26" fill="#0a6ad8"/><rect x="0" y="6" width="26" height="2" fill="#0a6ad8"/><rect x="0" y="12" width="26" height="2" fill="#0a6ad8"/><rect x="0" y="18" width="26" height="2" fill="#0a6ad8"/><rect x="9" y="13" width="22" height="18" fill="url(#sm1)" stroke="#0a6ad8" stroke-width="2"/><path d="M19 16 V30 M18 17 H28 M12 19 H18 M20 21 H24 M14 23 H18 M20 25 H22 M16 27 H18" stroke="#0a6ad8" stroke-width="2" fill="none"/></svg>
<span class="t" style="left:568.00px;top:1126.5px;font-size:25px;transform:scaleX(0.9672);"><u>Q</u>uality Control</span>
<svg style="left:972px;top:1130px;" width="10" height="18" viewBox="0 0 10 18" ><path d="M0 0 L9.5 9 L0 18 Z" fill="url(#ar)"/></svg>
<span class="t" style="left:568.00px;top:1172.5px;font-size:25px;letter-spacing:-0.225px;"><u>S</u>patial and Temporal Modeling...</span>
<svg style="left:972px;top:1176px;" width="10" height="18" viewBox="0 0 10 18" ><path d="M0 0 L9.5 9 L0 18 Z" fill="url(#ar)"/></svg>
<span class="t" style="left:568.00px;top:1218.5px;font-size:25px;transform:scaleX(0.9679);">Direct Mar<u>k</u>eting</span>
<svg style="left:972px;top:1222px;" width="10" height="18" viewBox="0 0 10 18" ><path d="M0 0 L9.5 9 L0 18 Z" fill="url(#ar)"/></svg>
<div class="menu" style="left:1016px;top:466px;width:498px;height:720px;"></div>
<div class="mi" style="left:1022px;top:472px;width:486px;height:708px;"></div>
<svg style="left:0px;top:0px;" width="1" height="1" viewBox="0 0 1 1" ><defs>
<linearGradient id="rgA" x1="0" y1="0" x2="0" y2="1"><stop offset="0" stop-color="#7e9cd0"/><stop offset="0.12" stop-color="#94aedb"/><stop offset="0.5" stop-color="#7898ce"/><stop offset="1" stop-color="#7898ce"/></linearGradient>
<linearGradient id="rgB" x1="0" y1="0" x2="0" y2="1"><stop offset="0" stop-color="#4e9ad2"/><stop offset="1" stop-color="#3e8ecc"/></linearGradient>
</defs></svg>
<span class="t" style="left:1068.20px;top:482.6px;font-size:25px;transform:scaleX(0.9731);"><u>A</u>utomatic Linear Modeling...</span>
<svg style="left:1028px;top:480px;" width="32" height="32" viewBox="0 0 32 32" ><rect x="1" y="1" width="30" height="30" fill="url(#rgA)" stroke="#0c3a98" stroke-width="2"/>
<rect x="2" y="16" width="28" height="14" fill="url(#rgB)"/>
<path d="M8 24.5 L30 9" stroke="#f8cc14" stroke-width="5"/>
<path d="M6 2 V28 H30" fill="none" stroke="#fff" stroke-width="4"/>
<rect x="2" y="2" width="2" height="28" fill="#6aa4dc"/></svg>
<span class="t" style="left:1068.20px;top:532.6px;font-size:25px;letter-spacing:-0.256px;"><u>L</u>inear...</span>
<svg style="left:1028px;top:530px;" width="32" height="32" viewBox="0 0 32 32" ><rect x="1" y="1" width="30" height="30" fill="url(#rgA)" stroke="#3c62b4" stroke-width="2"/>
<rect x="2" y="15" width="28" height="15" fill="url(#rgB)"/><rect x="2" y="28" width="28" height="2" fill="#56b8ec"/>
<text x="16.5" y="16" font-family="Liberation Sans, sans-serif" font-weight="bold" font-size="19" fill="#fff" text-anchor="middle">R</text>
<text x="5.5" y="28.5" font-family="Liberation Sans, sans-serif" font-weight="bold" font-size="13.5" fill="#fbf83c" textLength="21" lengthAdjust="spacingAndGlyphs">LIN</text></svg>
<span class="t" style="left:1068.20px;top:582.6px;font-size:25px;letter-spacing:-0.272px;"><u>C</u>urve Estimation...</span>
<svg style="left:1028px;top:582px;" width="32" height="30" viewBox="0 0 32 30" ><rect x="1" y="1" width="30" height="28" fill="url(#rgA)" stroke="#0c3a98" stroke-width="2"/>
<rect x="2" y="14" width="28" height="14" fill="url(#rgB)"/>
<path d="M5 27 V24 H7 V22 H10 V20 H16 V18 H17 V12 H19 V10 H24 V8 H25 V3" fill="none" stroke="#c81c28" stroke-width="2.4"/></svg>
<div class="hl" style="left:1022px;top:622px;width:486px;height:50px;"></div>
<span class="t" style="left:1068.20px;top:632.6px;font-size:25px;transform:scaleX(0.9471);">PROCESS v5.0 by Andrew F. Hayes</span>
<span class="t" style="left:1068.20px;top:682.6px;font-size:25px;letter-spacing:-0.160px;">Partial Lea<u>s</u>t Squares...</span>
<svg style="left:1028px;top:680px;" width="32" height="32" viewBox="0 0 32 32" ><rect x="1" y="1" width="30" height="30" fill="url(#rgA)" stroke="#0c3a98" stroke-width="2"/>
<rect x="2" y="15" width="28" height="15" fill="url(#rgB)"/><rect x="2" y="28" width="28" height="2" fill="#56b8ec"/>
<text x="16.5" y="16" font-family="Liberation Sans, sans-serif" font-weight="bold" font-size="19" fill="#fff" text-anchor="middle">R</text>
<text x="4.0" y="28.5" font-family="Liberation Sans, sans-serif" font-weight="bold" font-size="15.5" fill="#fbf83c" textLength="24" lengthAdjust="spacingAndGlyphs">PLS</text></svg>
<div class="sep" style="left:1022px;top:722px;width:486px;height:2px;"></div>
<span class="t" style="left:1068.20px;top:734.6px;font-size:25px;letter-spacing:-0.284px;">Binary Lo<u>g</u>istic...</span>
<svg style="left:1028px;top:734px;" width="32" height="30" viewBox="0 0 32 30" ><rect x="1" y="1" width="30" height="28" fill="url(#rgA)" stroke="#0c3a98" stroke-width="2"/>
<rect x="2" y="14" width="28" height="14" fill="url(#rgB)"/><rect x="2" y="26" width="28" height="2" fill="#56b8ec"/>
<text x="16.5" y="15" font-family="Liberation Sans, sans-serif" font-weight="bold" font-size="19" fill="#fff" text-anchor="middle">R</text>
<text x="4.0" y="26.5" font-family="Liberation Sans, sans-serif" font-weight="bold" font-size="14.5" fill="#fbf83c" textLength="24" lengthAdjust="spacingAndGlyphs">LOG</text></svg>
<span class="t" style="left:1068.20px;top:784.6px;font-size:25px;letter-spacing:-0.141px;"><u>M</u>ultinomial Logistic...</span>
<svg style="left:1028px;top:782px;" width="32" height="32" viewBox="0 0 32 32" ><rect x="1" y="1" width="30" height="30" fill="url(#rgA)" stroke="#4468b8" stroke-width="2"/>
<rect x="2" y="15" width="28" height="15" fill="url(#rgB)"/><rect x="2" y="28" width="28" height="2" fill="#56b8ec"/>
<text x="16.5" y="16" font-family="Liberation Sans, sans-serif" font-weight="bold" font-size="19" fill="#fff" text-anchor="middle">R</text>
<text x="2.5" y="28.5" font-family="Liberation Sans, sans-serif" font-weight="bold" font-size="10.5" fill="#fbf83c" textLength="27" lengthAdjust="spacingAndGlyphs">MULT</text></svg>
<span class="t" style="left:1068.20px;top:834.6px;font-size:25px;transform:scaleX(0.9673);">Or<u>d</u>inal...</span>
<svg style="left:1028px;top:832px;" width="32" height="32" viewBox="0 0 32 32" ><rect x="1" y="1" width="30" height="30" fill="url(#rgA)" stroke="#0c3a98" stroke-width="2"/>
<rect x="2" y="15" width="28" height="15" fill="url(#rgB)"/><rect x="2" y="28" width="28" height="2" fill="#56b8ec"/>
<text x="16.5" y="16" font-family="Liberation Sans, sans-serif" font-weight="bold" font-size="19" fill="#fff" text-anchor="middle">R</text>
<text x="5.0" y="28.5" font-family="Liberation Sans, sans-serif" font-weight="bold" font-size="11.5" fill="#fbf83c" textLength="22" lengthAdjust="spacingAndGlyphs">ORD</text></svg>
<span class="t" style="left:1068.20px;top:884.6px;font-size:25px;transform:scaleX(0.9516);"><u>P</u>robit...</span>
<svg style="left:1028px;top:882px;" width="32" height="32" viewBox="0 0 32 32" ><rect x="1" y="1" width="30" height="30" fill="url(#rgA)" stroke="#0c3a98" stroke-width="2"/>
<rect x="2" y="15" width="28" height="15" fill="url(#rgB)"/><rect x="2" y="28" width="28" height="2" fill="#56b8ec"/>
<text x="16.5" y="16" font-family="Liberation Sans, sans-serif" font-weight="bold" font-size="19" fill="#fff" text-anchor="middle">R</text>
<text x="2.5" y="28.5" font-family="Liberation Sans, sans-serif" font-weight="bold" font-size="11.5" fill="#fbf83c" textLength="27" lengthAdjust="spacingAndGlyphs">PROB</text></svg>
<div class="sep" style="left:1022px;top:924px;width:486px;height:2px;"></div>
<span class="t" style="left:1068.20px;top:936.6px;font-size:25px;letter-spacing:-0.187px;"><u>N</u>onlinear...</span>
<svg style="left:1028px;top:934px;" width="32" height="32" viewBox="0 0 32 32" ><rect x="1" y="1" width="30" height="30" fill="url(#rgA)" stroke="#0c3a98" stroke-width="2"/>
<rect x="2" y="15" width="28" height="15" fill="url(#rgB)"/><rect x="2" y="28" width="28" height="2" fill="#56b8ec"/>
<text x="16.5" y="16" font-family="Liberation Sans, sans-serif" font-weight="bold" font-size="19" fill="#fff" text-anchor="middle">R</text>
<text x="4.5" y="28.5" font-family="Liberation Sans, sans-serif" font-weight="bold" font-size="12.5" fill="#fbf83c" textLength="23" lengthAdjust="spacingAndGlyphs">NLR</text></svg>
<span class="t" style="left:1068.20px;top:986.6px;font-size:25px;letter-spacing:-0.222px;"><u>W</u>eight Estimation...</span>
<svg style="left:1028px;top:986px;" width="32" height="30" viewBox="0 0 32 30" ><rect x="1" y="1" width="30" height="28" fill="url(#rgA)" stroke="#0c3a98" stroke-width="2"/>
<rect x="2" y="14" width="28" height="14" fill="url(#rgB)"/><rect x="2" y="26" width="28" height="2" fill="#56b8ec"/>
<text x="16.5" y="15" font-family="Liberation Sans, sans-serif" font-weight="bold" font-size="19" fill="#fff" text-anchor="middle">R</text>
<text x="3.5" y="26.5" font-family="Liberation Sans, sans-serif" font-weight="bold" font-size="12" fill="#fbf83c" textLength="25" lengthAdjust="spacingAndGlyphs">WLS</text></svg>
<span class="t" style="left:1068.20px;top:1036.6px;font-size:25px;letter-spacing:-0.199px;"><u>2</u>-Stage Least Squares...</span>
<svg style="left:1028px;top:1034px;" width="32" height="32" viewBox="0 0 32 32" ><rect x="1" y="1" width="30" height="30" fill="url(#rgA)" stroke="#0c3a98" stroke-width="2"/>
<rect x="2" y="15" width="28" height="15" fill="url(#rgB)"/><rect x="2" y="28" width="28" height="2" fill="#56b8ec"/>
<text x="16.5" y="16" font-family="Liberation Sans, sans-serif" font-weight="bold" font-size="19" fill="#fff" text-anchor="middle">R</text>
<text x="2.5" y="28.5" font-family="Liberation Sans, sans-serif" font-weight="bold" font-size="11.5" fill="#fbf83c" textLength="27" lengthAdjust="spacingAndGlyphs">2SLS</text></svg>
<div class="sep" style="left:1022px;top:1076px;width:486px;height:2px;"></div>
<span class="t" style="left:1068.20px;top:1088.6px;font-size:25px;transform:scaleX(0.9627);"><u>Q</u>uantile...</span>
<svg style="left:1028px;top:1088px;" width="32" height="30" viewBox="0 0 32 30" ><rect x="1" y="1" width="30" height="28" fill="url(#rgA)" stroke="#2c56ac" stroke-width="2"/>
<rect x="2" y="14" width="28" height="14" fill="url(#rgB)"/><rect x="2" y="26" width="28" height="2" fill="#56b8ec"/>
<text x="16.5" y="15" font-family="Liberation Sans, sans-serif" font-weight="bold" font-size="19" fill="#fff" text-anchor="middle">R</text>
<text x="1.5" y="26.5" font-family="Liberation Sans, sans-serif" font-weight="bold" font-size="13" fill="#fbf83c" textLength="29" lengthAdjust="spacingAndGlyphs">QUAN</text></svg>
<div class="sep" style="left:1022px;top:1128px;width:486px;height:2px;"></div>
<span class="t" style="left:1068.20px;top:1140.6px;font-size:25px;transform:scaleX(0.9639);"><u>O</u>ptimal Scaling (CATREG)...</span>
<svg style="left:1468px;top:640px;" width="34" height="46" viewBox="0 0 34 46" ><path d="M4.8 4.9 V37 L12 30.6 L17.4 41.6 L21.6 39.4 L17.2 28.8 H28 Z" fill="#fff" stroke="#000" stroke-width="1.25" stroke-linejoin="miter"/></svg>
</div>
</body></html>
